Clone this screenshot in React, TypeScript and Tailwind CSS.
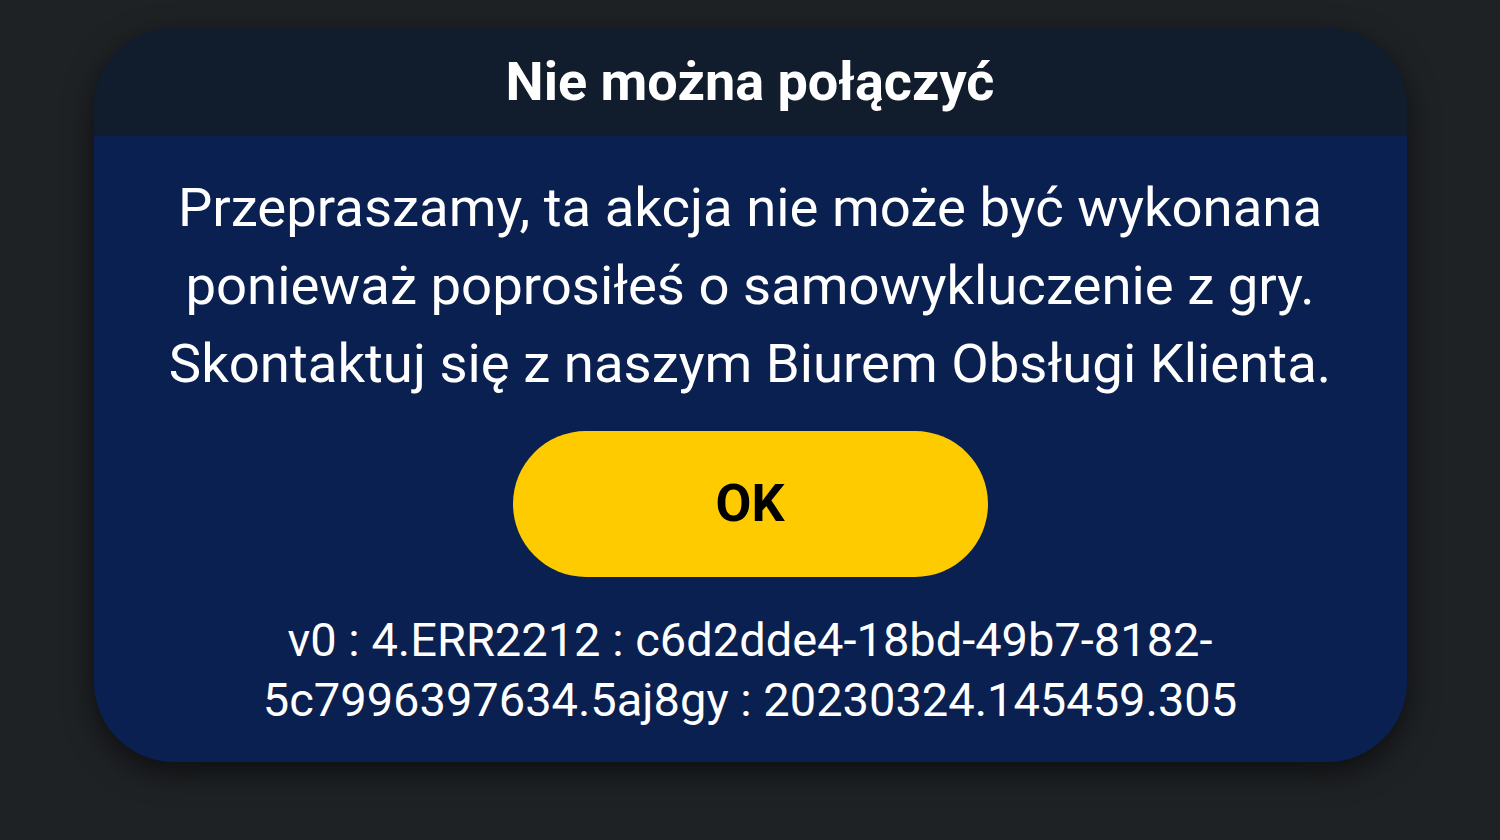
export default function App() {
  return (
    <div
      className="h-[840px] w-full bg-[#1f2225] pt-[28px]"
      style={{ fontFamily: 'Roboto, "Noto Sans", sans-serif' }}
    >
      <div className="mx-auto w-[1313px] overflow-hidden rounded-[80px] bg-[#0a2050] shadow-[0_10px_30px_rgba(0,0,0,0.6)]">
        <div className="flex h-[108px] items-center justify-center bg-[#111c2d]">
          <h1 className="text-[54px] font-bold leading-none text-white">Nie można połączyć</h1>
        </div>
        <div className="flex flex-col items-center px-6 pt-[32px] pb-[32px]">
          <p className="whitespace-nowrap text-center text-[54.5px] leading-[78px] text-white">
            Przepraszamy, ta akcja nie może być wykonana
            <br />
            ponieważ poprosiłeś o samowykluczenie z gry.
            <br />
            Skontaktuj się z naszym Biurem Obsługi Klienta.
          </p>
          <button className="mt-[29px] flex h-[146px] w-[475px] items-center justify-center rounded-full bg-[#fecb00] text-[52px] font-bold text-black">
            OK
          </button>
          <p className="mt-[33px] whitespace-nowrap text-center text-[47px] leading-[60px] text-white">
            v0 : 4.ERR2212 : c6d2dde4-18bd-49b7-8182-
            <br />
            5c7996397634.5aj8gy : 20230324.145459.305
          </p>
        </div>
      </div>
    </div>
  );
}
